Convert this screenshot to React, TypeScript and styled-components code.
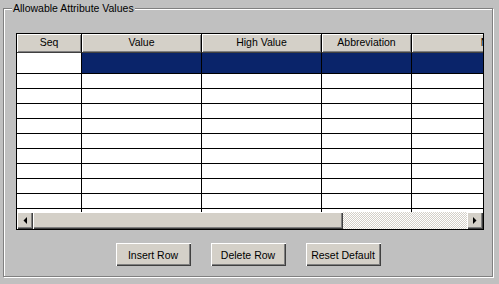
import React from "react";
import styled, { createGlobalStyle } from "styled-components";

const PAGE_BACKGROUND = `#c0c0c0`;
const FACE = `#d4d0c8`;
const SHADOW = `#808080`;
const DARK = `#404040`;
const HIGHLIGHT = `#ffffff`;
const SELECTED = `#0a246a`;
const GRID_LINE = `#000000`;

const GlobalStyle = createGlobalStyle`
  html, body {
    margin: 0;
    padding: 0;
    background: ${PAGE_BACKGROUND};
  }
`;

const Page = styled.div`
  width: 499px;
  height: 284px;
  box-sizing: border-box;
  padding: 8px 0 0 3px;
  background: ${PAGE_BACKGROUND};
  font-family: "Liberation Sans", Arial, sans-serif;
  font-size: 10.5px;
  color: #000;
`;

// etched group box: gray line outside, white line inside
const Frame = styled.div`
  width: 490px;
  height: 269px;
  box-sizing: border-box;
  border: 1px solid ${SHADOW};
  box-shadow: 1px 1px 0 ${HIGHLIGHT}, inset 1px 1px 0 ${HIGHLIGHT};
  display: flex;
  flex-direction: column;
  align-items: flex-start;
`;

const Legend = styled.div`
  margin: -8px 0 0 8px;
  padding: 0 1px;
  height: 14px;
  line-height: 14px;
  background: ${PAGE_BACKGROUND};
  white-space: nowrap;
`;

const Grid = styled.div`
  margin: 18px 0 0 12px;
  width: 468px;
  height: 197px;
  box-sizing: border-box;
  border: 1px solid ${GRID_LINE};
  display: flex;
  flex-direction: column;
  overflow: hidden;
  background: ${HIGHLIGHT};
`;

const HeaderRow = styled.div`
  display: flex;
  height: 19px;
  flex-shrink: 0;
`;

const HeaderCell = styled.div<{ $width: number }>`
  flex: 0 0 ${(p) => p.$width}px;
  box-sizing: border-box;
  height: 19px;
  line-height: 17px;
  text-align: center;
  white-space: nowrap;
  background: ${FACE};
  border-right: 1px solid ${GRID_LINE};
  border-bottom: 1px solid ${DARK};
  box-shadow: inset 1px 1px 0 ${HIGHLIGHT}, inset -1px -1px 0 ${SHADOW};
`;

const Body = styled.div`
  height: 159px;
  flex-shrink: 0;
  overflow: hidden;
`;

const Row = styled.div<{ $height: number }>`
  display: flex;
  height: ${(p) => p.$height}px;
`;

const Cell = styled.div<{ $width: number; $selected?: boolean }>`
  flex: 0 0 ${(p) => p.$width}px;
  box-sizing: border-box;
  border-right: 1px solid ${GRID_LINE};
  border-bottom: 1px solid ${GRID_LINE};
  background: ${(p) => (p.$selected ? SELECTED : HIGHLIGHT)};
`;

const ScrollBar = styled.div`
  display: flex;
  height: 17px;
  flex-shrink: 0;
`;

const ScrollPart = styled.div<{ $width: number }>`
  flex: 0 0 ${(p) => p.$width}px;
  box-sizing: border-box;
  display: flex;
  align-items: center;
  justify-content: center;
  background: ${FACE};
  box-shadow: inset 1px 1px 0 ${HIGHLIGHT}, inset -1px -1px 0 ${DARK},
    inset -2px -2px 0 ${SHADOW};
`;

const ScrollTrack = styled.div`
  flex: 1;
  background: repeating-conic-gradient(${HIGHLIGHT} 0 25%, ${FACE} 0 50%) 0 0 /
    2px 2px;
`;

const ButtonBar = styled.div`
  align-self: stretch;
  display: flex;
  justify-content: center;
  gap: 20px;
  margin-top: 13px;
`;

const Button = styled.button`
  width: 75px;
  height: 23px;
  padding: 0;
  border: none;
  font: inherit;
  color: #000;
  background: ${FACE};
  box-shadow: inset 1px 1px 0 ${HIGHLIGHT}, inset -1px -1px 0 ${DARK},
    inset -2px -2px 0 ${SHADOW};
`;

type Column = {
  title: string;
  width: number;
};

const columns: Column[] = [
  { title: "Seq", width: 65 },
  { title: "Value", width: 120 },
  { title: "High Value", width: 120 },
  { title: "Abbreviation", width: 90 },
  { title: "Notes", width: 166 },
];

const rowHeights = [21, 15, 15, 15, 15, 15, 15, 15, 15, 15, 15];

function Arrow(props: { dir: "left" | "right" }): JSX.Element {
  const points = props.dir === "left" ? "4,0 4,7 0.5,3.5" : "0,0 0,7 3.5,3.5";
  return (
    <svg width="4" height="7" viewBox="0 0 4 7" style={{ marginTop: -1 }}>
      <polygon points={points} fill="#000" />
    </svg>
  );
}

export default function App(): JSX.Element {
  return (
    <Page>
      <GlobalStyle />
      <Frame>
        <Legend>Allowable Attribute Values</Legend>
        <Grid>
          <HeaderRow>
            {columns.map((col) => (
              <HeaderCell key={col.title} $width={col.width}>
                {col.title}
              </HeaderCell>
            ))}
          </HeaderRow>
          <Body>
            {rowHeights.map((h, i) => (
              <Row key={i} $height={h}>
                {columns.map((col, c) => (
                  <Cell
                    key={col.title}
                    $width={col.width}
                    $selected={i === 0 && c > 0}
                  />
                ))}
              </Row>
            ))}
          </Body>
          <ScrollBar>
            <ScrollPart $width={16}>
              <Arrow dir="left" />
            </ScrollPart>
            <ScrollPart $width={310} />
            <ScrollTrack />
            <ScrollPart $width={16}>
              <Arrow dir="right" />
            </ScrollPart>
          </ScrollBar>
        </Grid>
        <ButtonBar>
          <Button>Insert Row</Button>
          <Button>Delete Row</Button>
          <Button>Reset Default</Button>
        </ButtonBar>
      </Frame>
    </Page>
  );
}
